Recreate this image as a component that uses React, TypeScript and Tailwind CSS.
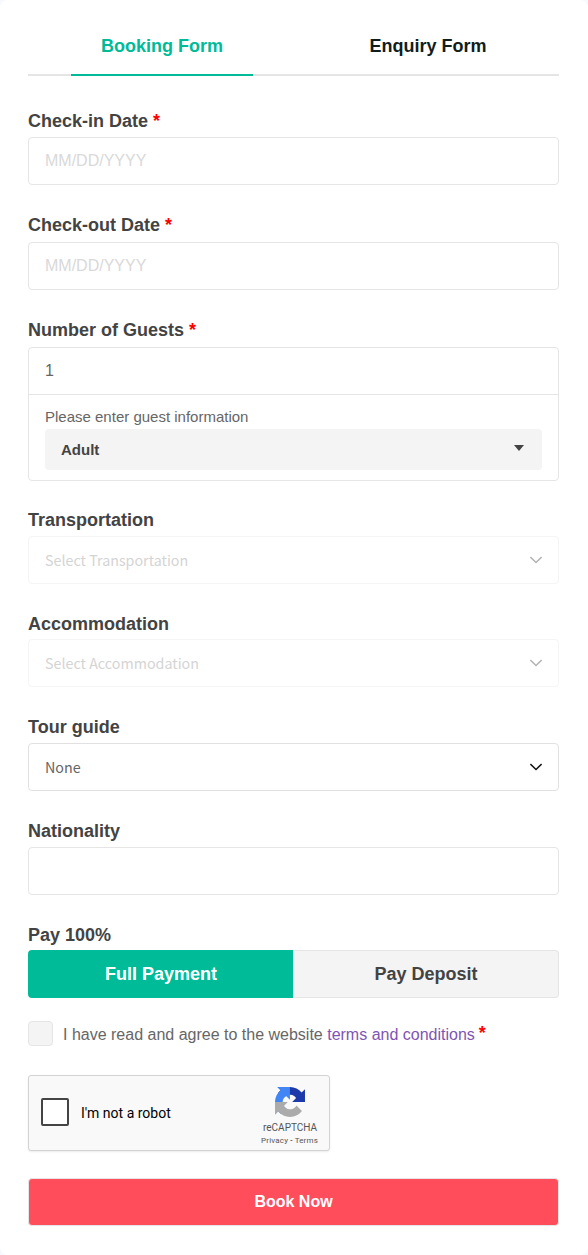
import type { ReactNode } from "react"
import clsx from "clsx"

function Required() {
    return <span className="text-[#ff0000]">*</span>
}

function Field({
    label,
    required,
    className,
    labelClassName = "mb-1",
    children,
}: {
    label: string
    required?: boolean
    className?: string
    labelClassName?: string
    children: ReactNode
}) {
    return (
        <div className={className}>
            <div className={clsx("text-lg leading-[22px] font-bold text-[#434343]", labelClassName)}>
                {label} {required && <Required />}
            </div>
            {children}
        </div>
    )
}

function DateInput() {
    return (
        <input
            type="text"
            placeholder="MM/DD/YYYY"
            className="block h-12 w-full rounded border border-[#e5e5e5] bg-white px-4 text-base placeholder:text-[#d9d9d9]"
        />
    )
}

function SelectBox({ value, disabled }: { value: string; disabled?: boolean }) {
    return (
        <div
            className={clsx(
                "flex h-12 items-center justify-between rounded border bg-white pr-4 pl-4",
                disabled ? "border-[#f5f5f5]" : "border-[#e1e1e1]"
            )}
        >
            <span
                className={clsx(
                    "pb-px font-['Noto_Sans_CJK_SC','Noto_Sans',sans-serif] text-[14.3px] leading-6",
                    disabled ? "text-[#d4d4d4]" : "text-[#666666]"
                )}
            >
                {value}
            </span>
            <svg
                width="12"
                height="8"
                viewBox="0 0 12 8"
                fill="none"
                strokeWidth="1.5"
                className={disabled ? "stroke-[#b3b3b3]" : "stroke-[#111111]"}
            >
                <path d="M0.4 1 L6 6.5 L11.6 1" />
            </svg>
        </div>
    )
}

function Recaptcha() {
    return (
        <div className="mt-[29px] flex h-[76px] w-[302px] items-center rounded-[3px] border border-[#d3d3d3] bg-[#f9f9f9] pl-3 font-[Roboto,sans-serif] text-black shadow-[0_1px_2px_rgba(0,0,0,0.08)]">
            <div className="-mt-0.5 size-7 rounded-[2px] border-2 border-[#444444] bg-white" />
            <span className="ml-3 text-sm leading-[17px]">I'm not a robot</span>
            <div className="mt-1.5 mr-[11px] ml-auto flex flex-col items-center text-[#555555]">
                <svg width="30" height="30" viewBox="0 0 64 64">
                    <path
                        fill="#1c3aa9"
                        d="M64 31.955l-.033-1.37V4.687l-7.16 7.16C50.948 4.674 42.033.093 32.05.093c-10.4 0-19.622 4.96-25.458 12.64l11.736 11.86a15.55 15.55 0 0 1 4.754-5.334c2.05-1.6 4.952-2.906 8.968-2.906.485 0 .86.057 1.135.163 4.976.393 9.288 3.14 11.828 7.124l-8.307 8.307L64 31.953"
                    />
                    <path
                        fill="#4285f4"
                        d="M31.862.094l-1.37.033H4.594l7.16 7.16C4.58 13.147 0 22.06 0 32.046c0 10.4 4.96 19.622 12.64 25.458L24.5 45.768a15.55 15.55 0 0 1-5.334-4.754c-1.6-2.05-2.906-4.952-2.906-8.968 0-.485.057-.86.163-1.135.393-4.976 3.14-9.288 7.124-11.828l8.307 8.307L31.86.095"
                    />
                    <path
                        fill="#ababab"
                        d="M.001 32.045l.033 1.37v25.898l7.16-7.16c5.86 7.173 14.774 11.754 24.76 11.754 10.4 0 19.622-4.96 25.458-12.64l-11.736-11.86a15.55 15.55 0 0 1-4.754 5.334c-2.05 1.6-4.952 2.906-8.968 2.906-.485 0-.86-.057-1.135-.163-4.976-.393-9.288-3.14-11.828-7.124l8.307-8.307c-10.522.04-22.4.066-27.295-.005"
                    />
                </svg>
                <span className="mt-[5px] ml-px text-[10px] leading-3">reCAPTCHA</span>
                <span className="mt-0.5 text-[8px] leading-[10px] tracking-[0.17px]">
                    Privacy <span className="text-black">-</span> Terms
                </span>
            </div>
        </div>
    )
}

export default function App() {
    return (
        <div className="bg-[#f8f9ff]">
            <form className="h-[1255px] w-[588px] rounded-[8px] bg-white pr-[29px] pl-7 font-['Liberation_Sans',Arial,sans-serif]">
                <nav className="flex h-[76px] justify-between border-b-2 border-[#e5e5e5] pr-10 pl-[43px] text-lg font-bold">
                    <a className="-mb-0.5 w-[182px] border-b-2 border-[#00bb98] pt-8 text-center text-[#00bb98]">
                        Booking Form
                    </a>
                    <a className="w-[182px] pt-8 text-center text-[#111d1d]">Enquiry Form</a>
                </nav>

                <Field label="Check-in Date" required className="pt-[34px]" labelClassName="mb-[5px]">
                    <DateInput />
                </Field>
                <Field label="Check-out Date" required className="mt-[29px]" labelClassName="mb-1.5">
                    <DateInput />
                </Field>

                <Field label="Number of Guests" required className="mt-[29px]" labelClassName="mb-1.5">
                    <div className="h-[134px] rounded border border-[#e5e5e5] bg-white">
                        <div className="h-[47px] border-b border-[#e5e5e5] px-4 pt-[11px] text-base text-[#666666]">
                            1
                        </div>
                        <div className="px-4 pt-[11px]">
                            <p className="mb-px text-[15px] leading-[22px] text-[#666666]">
                                Please enter guest information
                            </p>
                            <div className="flex h-[41px] items-center justify-between rounded bg-[#f4f4f4] pr-[18px] pl-4 text-[15px] font-bold text-[#434343]">
                                <span className="pt-0.5">Adult</span>
                                <svg width="10" height="6" viewBox="0 0 10 6" className="mb-1">
                                    <path d="M0 0h10L5 6z" fill="#434343" />
                                </svg>
                            </div>
                        </div>
                    </div>
                </Field>

                <Field label="Transportation" className="mt-7" labelClassName="mb-[5px]">
                    <SelectBox value="Select Transportation" disabled />
                </Field>
                <Field label="Accommodation" className="mt-[29px]" labelClassName="mb-1">
                    <SelectBox value="Select Accommodation" disabled />
                </Field>
                <Field label="Tour guide" className="mt-[29px]" labelClassName="mb-[5px]">
                    <SelectBox value="None" />
                </Field>
                <Field label="Nationality" className="mt-[29px]" labelClassName="mb-[5px]">
                    <input
                        type="text"
                        className="block h-12 w-full rounded border border-[#e5e5e5] bg-white px-4"
                    />
                </Field>

                <Field label="Pay 100%" className="mt-[29px]">
                    <div className="flex h-12 text-lg font-bold">
                        <button type="button" className="w-[265px] rounded-l bg-[#00bb98] pl-px text-white">
                            Full Payment
                        </button>
                        <button
                            type="button"
                            className="flex-1 rounded-r border border-l-0 border-[#e5e5e5] bg-[#f4f4f4] pl-px text-[#434343]"
                        >
                            Pay Deposit
                        </button>
                    </div>
                </Field>

                <label className="mt-[23px] flex h-[25px] items-center">
                    <span className="size-[25px] rounded border border-[#e5e5e5] bg-[#f4f4f4]" />
                    <span className="ml-2.5 pt-0.5 text-base text-[#666666]">
                        I have read and agree to the website{" "}
                        <a className="text-[#7f54b3]">terms and conditions</a>
                    </span>
                    <span className="mb-0.5 ml-1 text-lg font-bold">
                        <Required />
                    </span>
                </label>

                <Recaptcha />

                <button
                    type="submit"
                    className="mt-[27px] block h-12 w-full rounded border border-[#e5e5e5] bg-[#ff4d5c] text-base font-bold text-white"
                >
                    Book Now
                </button>
            </form>
        </div>
    )
}
